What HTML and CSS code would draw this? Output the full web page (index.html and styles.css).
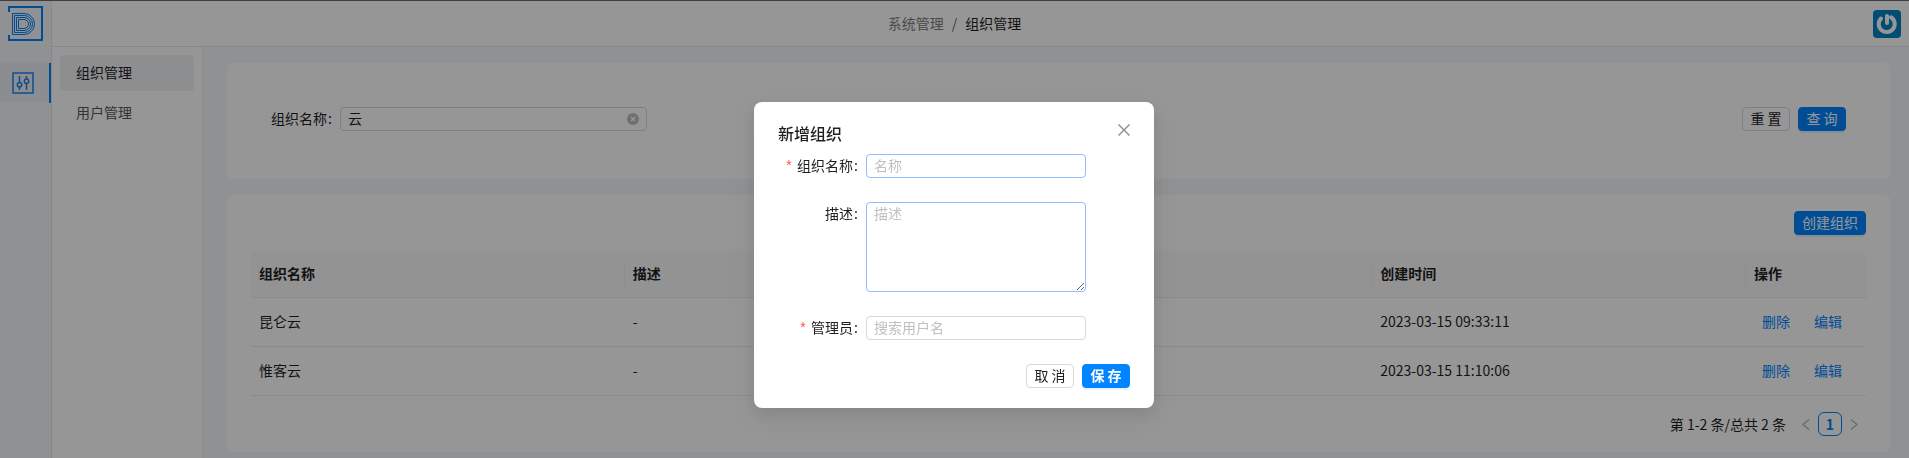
FILE: index.html
```html
<!DOCTYPE html>
<html lang="zh-CN">
<head>
<meta charset="utf-8">
<meta name="viewport" content="width=device-width, initial-scale=1">
<title>组织管理</title>
<link rel="stylesheet" href="styles.css">
</head>
<body>
<div class="app">
  <aside class="rail">
    <a class="logo" href="#" aria-label="首页">
      <svg width="36" height="36" viewBox="0 0 36 36" fill="none" stroke="#0084ff">
        <path d="M1 6V1h33v33H1v-5" stroke-width="2"/>
        <path d="M4.500 7.500H16a10.500 10.500 0 0 1 0 21H4.500z"/>
        <path d="M6.500 9.500H16a8.500 8.500 0 0 1 0 17H6.500z"/>
        <path d="M8.500 11.500H16a6.500 6.500 0 0 1 0 13H8.500z"/>
        <path d="M10.500 13.500H16a4.500 4.500 0 0 1 0 9H10.500z"/>
      </svg>
    </a>
    <a class="rail-item" href="#" aria-label="系统管理">
      <svg width="22" height="22" viewBox="0 0 22 22" fill="none" stroke="#1a85ee" stroke-width="1.500">
        <rect x="1" y="1" width="20" height="20"/>
        <path d="M7.500 4v6.500M7.500 15v3M14.500 4v3M14.500 11.500V18"/>
        <circle cx="7.500" cy="12.750" r="2.200"/>
        <circle cx="14.500" cy="9.250" r="2.200"/>
      </svg>
    </a>
  </aside>
  <div class="main">
    <header class="topbar">
      <nav class="crumbs" aria-label="面包屑">
        <a href="#">系统管理</a><span class="slash">/</span><span class="current">组织管理</span>
      </nav>
      <button class="avatar" type="button" aria-label="用户">
        <svg width="28" height="28" viewBox="0 0 28 28" fill="none" stroke="#fff" stroke-width="4" stroke-linecap="round">
          <path d="M14 6v7"/>
          <path d="M8 8.500a8 8 0 1 0 10-1.200"/>
        </svg>
      </button>
    </header>
    <div class="body">
      <nav class="side">
        <a class="side-item active" href="#">组织管理</a>
        <a class="side-item" href="#">用户管理</a>
      </nav>
      <main class="content">
        <form class="card search">
          <div class="search-field">
            <label class="label" for="q">组织名称</label>
            <span class="input clearable">
              <input id="q" type="text" value="云">
              <button class="clear" type="button" aria-label="清除">
                <svg width="12" height="12" viewBox="0 0 12 12"><circle cx="6" cy="6" r="6" fill="#bfbfbf"/><path d="M4 4l4 4M8 4L4 8" stroke="#fff" stroke-width="1.200"/></svg>
              </button>
            </span>
          </div>
          <div class="actions">
            <button class="btn" type="button">重 置</button>
            <button class="btn primary" type="button">查 询</button>
          </div>
        </form>
        <section class="card list">
          <div class="actions"><button class="btn primary" type="button">创建组织</button></div>
          <table class="table">
            <thead>
              <tr><th>组织名称</th><th>描述</th><th></th><th>创建时间</th><th class="col-ops">操作</th></tr>
            </thead>
            <tbody>
              <tr><td>昆仑云</td><td>-</td><td></td><td>2023-03-15 09:33:11</td><td><span class="ops"><a href="#">删除</a><a href="#">编辑</a></span></td></tr>
              <tr><td>惟客云</td><td>-</td><td></td><td>2023-03-15 11:10:06</td><td><span class="ops"><a href="#">删除</a><a href="#">编辑</a></span></td></tr>
            </tbody>
          </table>
          <div class="pager">
            <span class="total">第 1-2 条/总共 2 条</span>
            <button class="page" type="button" aria-label="上一页"><svg width="8" height="12" viewBox="0 0 8 12"><path d="M7 1.500L1 6.500l6 5"/></svg></button>
            <button class="page current" type="button">1</button>
            <button class="page" type="button" aria-label="下一页"><svg width="8" height="12" viewBox="0 0 8 12"><path d="M1 1.500l6 5-6 5"/></svg></button>
          </div>
        </section>
      </main>
    </div>
  </div>
</div>

<div class="mask">
  <form class="modal" role="dialog" aria-labelledby="modal-title">
    <div class="modal-head">
      <h2 id="modal-title">新增组织</h2>
      <button class="close" type="button" aria-label="关闭">
        <svg width="12" height="12" viewBox="0 0 12 12"><path d="M.5.500l11 11M11.500.500l-11 11" stroke="#8c8c8c" stroke-width="1.400"/></svg>
      </button>
    </div>
    <div class="fields">
      <label class="label required" for="name">组织名称</label>
      <input class="input active" id="name" type="text" placeholder="名称">
      <label class="label" for="desc">描述</label>
      <textarea class="input active" id="desc" placeholder="描述"></textarea>
      <label class="label required" for="admin">管理员</label>
      <input class="input" id="admin" type="text" placeholder="搜索用户名">
    </div>
    <div class="actions">
      <button class="btn" type="button">取 消</button>
      <button class="btn primary strong" type="button">保 存</button>
    </div>
  </form>
</div>
</body>
</html>
```
FILE: styles.css
```css
* { box-sizing: border-box; }

body {
  margin: 0;
  color: #1f1f1f;
  background: #f5f7fa;
  font: 14px/22px "Noto Sans CJK SC", sans-serif;
}

a { color: #0084ff; text-decoration: none; }
button, input, textarea { font: inherit; color: inherit; }
svg { display: block; }

.app {
  display: flex;
  min-height: 100vh;
  border-top: 1px solid #6b6672;
}

.rail {
  flex: none;
  width: 52px;
  background: #f5f6fa;
  border-right: 1px solid #e8e8ec;
}
.logo {
  display: flex;
  align-items: center;
  height: 46px;
  padding-left: 8px;
}
.rail-item {
  display: flex;
  align-items: center;
  height: 40px;
  margin-top: 16px;
  padding-left: 12px;
  background: #eef0f5;
  border-right: 2px solid #0084ff;
}

.main { flex: 1; min-width: 0; display: flex; flex-direction: column; }
.topbar {
  display: grid;
  grid-template-columns: 1fr auto 1fr;
  align-items: center;
  height: 46px;
  padding-right: 8px;
  background: #fff;
  border-bottom: 1px solid #e8e8ec;
}
.crumbs { grid-column: 2; padding: 0 44px 2px 0; }
.crumbs a { color: #808080; }
.slash { margin: 0 8px; color: #666; }
.avatar {
  justify-self: end;
  padding: 0;
  border: 0;
  border-radius: 4px;
  background: #0084c4;
}

.body { flex: 1; display: flex; }
.side {
  flex: none;
  width: 151px;
  padding: 8px;
  background: #fff;
  border-right: 1px solid #ececf0;
}
.side-item {
  display: block;
  margin-bottom: 4px;
  padding: 6px 16px 8px;
  border-radius: 4px;
  color: #595959;
}
.side-item.active { background: #f0f1f5; color: #1f1f1f; }

.content {
  flex: 1;
  min-width: 0;
  display: flex;
  flex-direction: column;
  gap: 16px;
  padding: 16px 19px 6px 24px;
}
.card { background: #fff; border-radius: 6px; }

.search {
  display: flex;
  justify-content: space-between;
  padding: 44px 44px 48px;
}
.search-field { display: flex; width: calc(25% - 18px); }

.label { line-height: 22px; white-space: nowrap; text-align: right; }
.label::after { content: ":"; margin: 0 8px 0 1px; }
.required::before {
  content: "*";
  margin-right: 4px;
  color: #ff4d4f;
  font-family: "Liberation Mono", monospace;
}

.input {
  width: 100%;
  height: 24px;
  padding: 0 7px 2px;
  background: #fff;
  border: 1px solid #d9d9d9;
  border-radius: 4px;
  outline: 0;
}
.input.active { border-color: #8fbfff; }
.input::placeholder { color: #bfbfbf; }
textarea.input { display: block; height: 90px; line-height: 20px; resize: vertical; }
.clearable { display: flex; align-items: center; padding-bottom: 0; }
.clearable input { flex: 1; min-width: 0; padding: 0 0 2px; border: 0; outline: 0; background: none; }
.clear { padding: 0; border: 0; background: none; }

.actions { display: flex; justify-content: flex-end; gap: 8px; }
.btn {
  min-width: 48px;
  height: 24px;
  padding: 0 7px 2px;
  line-height: 20px;
  white-space: nowrap;
  background: #fff;
  border: 1px solid #d9d9d9;
  border-radius: 4px;
}
.btn.primary {
  color: #fff;
  background: #0084ff;
  border-color: #0084ff;
  box-shadow: 0 2px 0 rgba(5, 145, 255, .1);
}
.btn.strong { font-weight: 700; }

.list { padding: 16px 24px; }
.table {
  width: 100%;
  margin: 16px 0;
  table-layout: fixed;
  border-collapse: separate;
  border-spacing: 0;
}
.table th, .table td {
  height: 49px;
  padding: 0 8px 2px;
  text-align: left;
  border-bottom: 1px solid #ececec;
}
.table th {
  position: relative;
  height: 47px;
  font-weight: 700;
  background: #fafafa;
}
.table th:first-child { border-top-left-radius: 6px; }
.table th:last-child { border-top-right-radius: 6px; }
.table th:not(:last-child)::after {
  content: "";
  position: absolute;
  top: 12px;
  right: 0;
  width: 1px;
  height: 22px;
  background: #f0f0f0;
}
.col-ops { width: 120px; }
.ops { display: flex; gap: 24px; padding-left: 8px; }

.pager { display: flex; justify-content: flex-end; }
.total { margin-right: 8px; line-height: 24px; }
.page {
  display: flex;
  align-items: center;
  justify-content: center;
  width: 24px;
  height: 24px;
  padding: 0;
  background: none;
  border: 1px solid transparent;
  border-radius: 6px;
}
.page path { fill: none; stroke: #b0b0b0; stroke-width: 1.2; }
.page.current { color: #0084ff; font-weight: 700; border-color: #0084ff; }

.mask {
  position: fixed;
  inset: 0;
  display: flex;
  align-items: flex-start;
  justify-content: center;
  padding: 102px 1px 0 0;
  background: rgba(0, 0, 0, .41);
}
.modal {
  width: 400px;
  padding: 20px 24px;
  background: #fff;
  border-radius: 8px;
  box-shadow: 0 6px 16px rgba(0, 0, 0, .08), 0 9px 28px 8px rgba(0, 0, 0, .05);
}
.modal-head { display: flex; justify-content: space-between; margin-bottom: 10px; }
.modal-head h2 { margin: 0; font-size: 16px; line-height: 22px; font-weight: 500; }
.close {
  align-self: flex-start;
  padding: 2px 0;
  border: 0;
  background: none;
}
.fields {
  display: grid;
  grid-template-columns: 88px 220px;
  row-gap: 24px;
  margin-bottom: 24px;
}
```
